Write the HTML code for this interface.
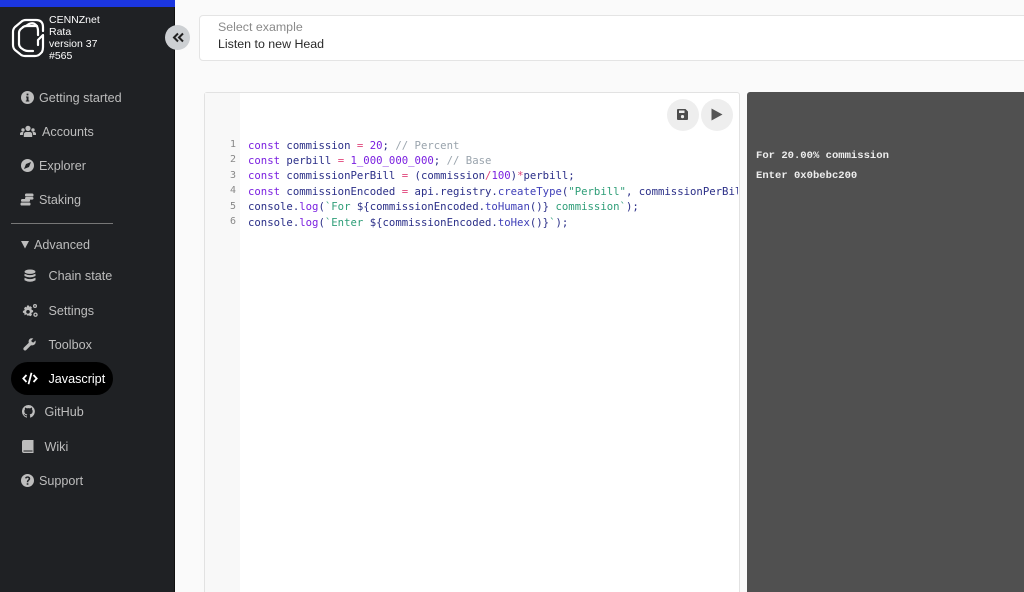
<!DOCTYPE html>
<html><head><meta charset="utf-8">
<style>
*{box-sizing:border-box}
html,body{margin:0;padding:0;width:1024px;height:592px;overflow:hidden;background:#fafafa;font-family:"Liberation Sans",sans-serif}
#wrap{position:relative;width:1024px;height:592px;overflow:hidden;background:#fafafa}
.abs{position:absolute}
#side{position:absolute;left:0;top:0;width:175px;height:592px;background:#1f2124;border-right:1px solid #111}
#top{position:absolute;left:0;top:0;width:175px;height:7px;background:#1b36e0}
.t{position:absolute;font-size:12.6px;color:#bdbdbd;line-height:16px;white-space:nowrap;transform:translateY(-50%)}
.i{position:absolute;fill:#bdbdbd}
.h{position:absolute;left:49px;color:#fff;font-size:10.5px;line-height:12px;white-space:nowrap}
#code{position:absolute;left:248px;top:137.5px;font-family:"DejaVu Sans Mono",monospace;font-size:10.65px;line-height:15.45px;white-space:pre;color:#2b2f88;width:490px;overflow:hidden}
.n{position:absolute;left:212px;width:24px;text-align:right;font-family:"DejaVu Sans Mono",monospace;font-size:10px;color:#888;line-height:15.45px}
.k{color:#7a1fe0}.c{color:#9aa4ad}.s{color:#2f9e78}.o{color:#e0457b}
.out{position:absolute;left:756px;font-family:"Liberation Mono",monospace;font-weight:bold;font-size:10.55px;color:#eee;white-space:pre;line-height:12px}
</style></head><body><div id="wrap">
<div id="side"></div><div id="top"></div>
<svg class="abs" style="left:11px;top:18px" width="34" height="40" viewBox="0 0 34 40" fill="none" stroke="#fff" stroke-width="2.2" stroke-linejoin="round" stroke-linecap="round">
<path d="M32 13V9Q32 2 25 2H15Q12 2 10 4L4 9Q2 11 2 14V27Q2 30 4 32L9 36Q11 38 14 38H24Q27 38 29 36L31 34Q32 32 32 29V17L27 22V27"/>
<path d="M26 8H15Q13 8 11 10Q8 12 8 15V26Q8 28 10 30L13 32Q15 33 17 33H22"/>
<path d="M15 8Q21 3 25 7Q27 9 27 13V17"/>
</svg>
<div class="h" style="top:14px">CENNZnet</div>
<div class="h" style="top:26px">Rata</div>
<div class="h" style="top:38px">version 37</div>
<div class="h" style="top:50px">#565</div>
<div class="abs" style="left:165px;top:25px;width:25px;height:25px;border-radius:50%;background:#cdd0d3"></div>
<svg class="abs" style="left:172px;top:32px" width="12" height="11" viewBox="0 0 12 11" fill="none" stroke="#222" stroke-width="2"><path d="M6 1.500L2 5.500L6 9.500M11 1.500L7 5.500L11 9.500"/></svg>

<svg class="i" style="left:21px;top:91px" width="13" height="13" viewBox="0 0 13 13"><path fill-rule="evenodd" d="M6.500 0a6.500 6.500 0 1 0 0 13a6.500 6.500 0 0 0 0-13zM5.600 2.600h1.800v1.800H5.600zM5 5.500h2.500v4h.8v1H4.800v-1h.8v-3H5z"/></svg>
<div class="t" style="left:39px;top:98px">Getting started</div>
<svg class="i" style="left:20px;top:125px" width="16" height="13" viewBox="0 0 16 13"><circle cx="8" cy="3.400" r="2.600"/><circle cx="3" cy="5" r="1.700"/><circle cx="13" cy="5" r="1.700"/><path d="M3.800 12V9.500Q4 7 6.500 7h3Q12 7 12.200 9.500V12zM0 10V8.500Q.3 7 2 7h1.500L2.800 10zM16 10V8.500Q15.700 7 14 7h-1.500l.7 3z"/></svg>
<div class="t" style="left:42px;top:132px">Accounts</div>
<svg class="i" style="left:21px;top:159px" width="13" height="13" viewBox="0 0 13 13"><path fill-rule="evenodd" d="M6.500 0a6.500 6.500 0 1 0 0 13a6.500 6.500 0 0 0 0-13zM10 3L8 8L3 10L5 5z"/></svg>
<div class="t" style="left:39px;top:166px">Explorer</div>
<svg class="i" style="left:20px;top:193px" width="14" height="13" viewBox="0 0 14 13"><rect x="5" y="0.500" width="8.500" height="3" rx="1.300"/><rect x="5" y="4" width="8.500" height="2.600" rx="1.200"/><rect x="1" y="6" width="9" height="2.800" rx="1.300"/><rect x="0.500" y="9.500" width="10" height="3" rx="1.300"/></svg>
<div class="t" style="left:39px;top:200px">Staking</div>
<div class="abs" style="left:11px;top:223px;width:102px;height:1px;background:#777"></div>
<svg class="i" style="left:21px;top:241px" width="8" height="8" viewBox="0 0 8 8"><path d="M0 0H8L4 7.500z"/></svg>
<div class="t" style="left:34px;top:245px">Advanced</div>
<svg class="i" style="left:24px;top:269px" width="12" height="14" viewBox="0 0 12 13"><ellipse cx="6" cy="2.200" rx="5.500" ry="2.200"/><path d="M.5 4.200Q6 7 11.500 4.200V6.500Q6 9.300 .5 6.500zM.5 8.300Q6 11 11.500 8.300V10.800Q6 13.800 .5 10.800z"/></svg>
<div class="t" style="left:48.500px;top:276px">Chain state</div>
<svg class="i" style="left:22px;top:304px" width="16" height="13" viewBox="0 0 16 13"><path fill-rule="evenodd" d="M5 1.500h2l.3 1.300 1.300-.6 1.400 1.500-.7 1.100.6 1.200 1.200.2v2l-1.200.2-.6 1.200.7 1.100-1.400 1.500-1.300-.6L7 11.500H5l-.3-1.300-1.300.6L2 11.300l.7-1.100-.6-1.200L.9 8.800v-2l1.200-.2.6-1.200L2 4.300l1.400-1.500 1.300.6zM6 6a1.800 1.800 0 1 0 0 3.600a1.800 1.800 0 0 0 0-3.600z"/><path fill-rule="evenodd" d="M13 0a2 2 0 1 0 0 4a2 2 0 0 0 0-4zM13 1.200a.8.8 0 1 1 0 1.600a.8.8 0 0 1 0-1.600zM13.500 8.500a2.200 2.200 0 1 0 0 4.400a2.200 2.200 0 0 0 0-4.400zM13.500 9.800a.9.900 0 1 1 0 1.800a.9.900 0 0 1 0-1.800z"/></svg>
<div class="t" style="left:48.500px;top:311px">Settings</div>
<svg class="i" style="left:23px;top:338px" width="13" height="13" viewBox="0 0 13 13"><path d="M12.500 2.500L10.500 4.500 8.800 4 8.300 2.500 10.300.5Q7.500-.3 6.200 1.500 5.200 3 5.800 4.800L.7 9.800Q0 10.800.7 11.900 1.800 13 3 12.200L8 7.200Q10 7.800 11.500 6.500 13.200 5 12.500 2.500z"/></svg>
<div class="t" style="left:48.500px;top:344.500px">Toolbox</div>
<div class="abs" style="left:11px;top:362px;width:102px;height:33px;border-radius:17px;background:#000"></div>
<svg class="abs" style="left:22px;top:372px" width="16" height="13" viewBox="0 0 16 13" fill="none" stroke="#fff" stroke-width="1.800"><path d="M4.500 3L1.300 6.500L4.500 10M11.500 3L14.700 6.500L11.500 10M9.500 .8L6.500 12.200"/></svg>
<div class="t" style="left:48.500px;top:378.500px;color:#fff">Javascript</div>
<svg class="i" style="left:22px;top:405px" width="13" height="13" viewBox="0 0 16 16"><path d="M8 0a8 8 0 0 0-2.500 15.600c.4.100.5-.2.500-.4v-1.400c-2.200.5-2.700-1-2.700-1-.4-.9-.9-1.200-.9-1.200-.7-.5.100-.5.100-.5.800.1 1.200.8 1.200.8.700 1.200 1.900.9 2.300.7.100-.5.300-.9.500-1.100-1.800-.2-3.600-.9-3.600-4 0-.9.300-1.600.8-2.100-.1-.2-.4-1 .1-2.100 0 0 .7-.2 2.200.8a7.600 7.600 0 0 1 4 0c1.500-1 2.200-.8 2.200-.8.400 1.100.2 1.900.1 2.100.5.600.8 1.300.8 2.100 0 3.100-1.900 3.700-3.700 3.900.3.300.6.800.6 1.500v2.200c0 .2.100.5.600.4A8 8 0 0 0 8 0z"/></svg>
<div class="t" style="left:44.500px;top:412px">GitHub</div>
<svg class="i" style="left:22px;top:440px" width="12" height="13" viewBox="0 0 12 13"><path fill-rule="evenodd" d="M2 0H11.500V13H2Q0 13 0 11V2Q0 0 2 0zM1.500 10.500V11.500H10.500V10.500z"/></svg>
<div class="t" style="left:44.500px;top:447px">Wiki</div>
<svg class="i" style="left:21px;top:474px" width="13" height="13" viewBox="0 0 13 13"><path fill-rule="evenodd" d="M6.500 0a6.500 6.500 0 1 0 0 13a6.500 6.500 0 0 0 0-13zM5.700 9.200h1.700v1.600H5.700zM6.600 2.400c1.500 0 2.600.9 2.600 2.200 0 1.900-1.900 1.800-1.900 3.600H5.800c0-2.400 1.800-2.500 1.800-3.500 0-.5-.4-.9-1-.9-.7 0-1.100.4-1.400 1L4 4C4.500 3 5.300 2.400 6.600 2.400z"/></svg>
<div class="t" style="left:39px;top:481px">Support</div>

<div class="abs" style="left:199px;top:15px;width:840px;height:46px;background:#fff;border:1px solid #e4e4e4;border-radius:4px"></div>
<div class="abs" style="left:218px;top:20px;font-size:12.4px;line-height:14px;color:#8a8a8a;white-space:nowrap">Select example</div>
<div class="abs" style="left:218px;top:37px;font-size:12.4px;line-height:14px;color:#2a2a2a;white-space:nowrap">Listen to new Head</div>

<div class="abs" style="left:204px;top:92px;width:536px;height:510px;background:#fff;border:1px solid #e2e2e2;border-radius:3px"></div>
<div class="abs" style="left:205px;top:93px;width:35px;height:500px;background:#f8f8f8"></div>
<div class="n" style="top:137px">1<br>2<br>3<br>4<br>5<br>6</div>
<div id="code"><span class="k">const</span> commission <span class="o">=</span> <span class="k">20</span>; <span class="c">// Percent</span>
<span class="k">const</span> perbill <span class="o">=</span> <span class="k">1_000_000_000</span>; <span class="c">// Base</span>
<span class="k">const</span> commissionPerBill <span class="o">=</span> (commission<span class="o">/</span><span class="k">100</span>)<span class="o">*</span>perbill;
<span class="k">const</span> commissionEncoded <span class="o">=</span> api.registry.<span style="color:#3f3fb8">createType</span>(<span class="s">"Perbill"</span>, commissionPerBil
console.<span style="color:#7a1fe0">log</span>(<span class="s">`For </span>${commissionEncoded.<span style="color:#3f3fb8">toHuman</span>()}<span class="s"> commission`</span>);
console.<span style="color:#7a1fe0">log</span>(<span class="s">`Enter </span>${commissionEncoded.<span style="color:#3f3fb8">toHex</span>()}<span class="s">`</span>);</div>
<div class="abs" style="left:667px;top:99px;width:32px;height:32px;border-radius:50%;background:#eee"></div>
<div class="abs" style="left:701px;top:99px;width:32px;height:32px;border-radius:50%;background:#eee"></div>
<svg class="abs" style="left:677px;top:109px" width="11" height="11" viewBox="0 0 11 11"><path fill="#4d4d4d" fill-rule="evenodd" d="M1 0H8.500L11 2.500V10Q11 11 10 11H1Q0 11 0 10V1Q0 0 1 0zM2 1.500V4H7.500V1.500zM5.500 6a1.600 1.600 0 1 0 0 3.200a1.600 1.600 0 0 0 0-3.200z"/></svg>
<svg class="abs" style="left:711px;top:108px" width="12" height="13" viewBox="0 0 12 13"><path fill="#555" d="M0.500 0.500L11.500 6.500L0.500 12.500z"/></svg>

<div class="abs" style="left:747px;top:92px;width:290px;height:510px;background:#505050;border-radius:3px 0 0 0"></div>
<div class="out" style="top:150px">For 20.00% commission</div>
<div class="out" style="top:170px">Enter 0x0bebc200</div>
</div></body></html>
